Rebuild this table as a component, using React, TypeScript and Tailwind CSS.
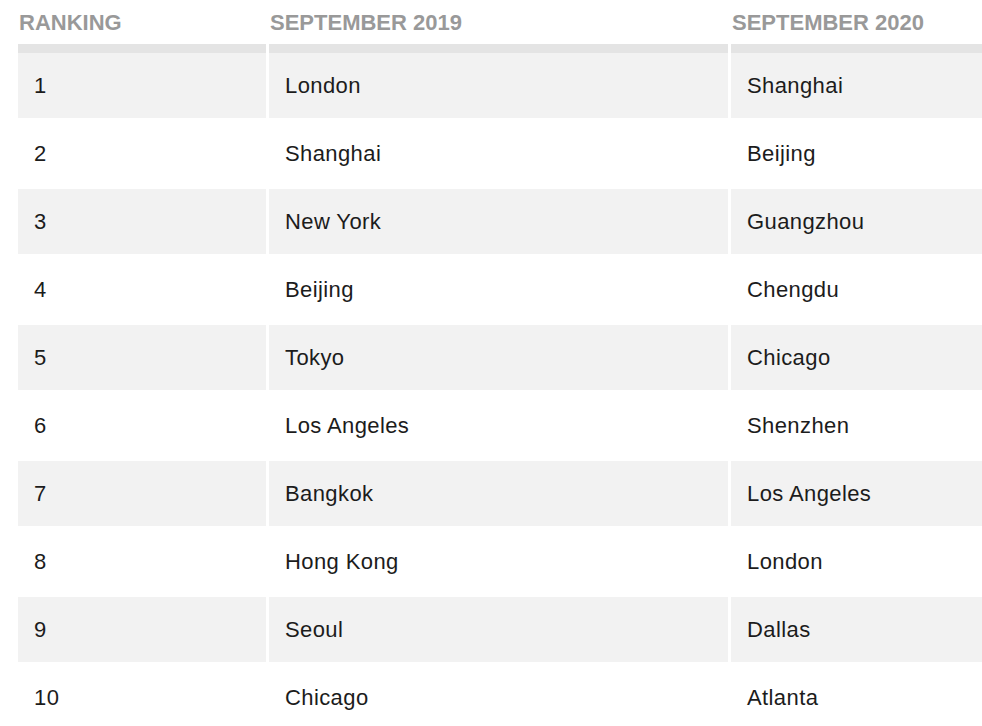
const rows = [
  ["1", "London", "Shanghai"],
  ["2", "Shanghai", "Beijing"],
  ["3", "New York", "Guangzhou"],
  ["4", "Beijing", "Chengdu"],
  ["5", "Tokyo", "Chicago"],
  ["6", "Los Angeles", "Shenzhen"],
  ["7", "Bangkok", "Los Angeles"],
  ["8", "Hong Kong", "London"],
  ["9", "Seoul", "Dallas"],
  ["10", "Chicago", "Atlanta"],
]

const cols = "grid grid-cols-[248px_459px_251px] gap-x-[3px]"

export default function App() {
  return (
    <div className="h-[726px] w-[982px] overflow-hidden bg-white pl-[18px] font-['Liberation_Sans',Arial,sans-serif]">
      <div className={`${cols} h-[44px] items-center text-[22px] font-bold text-[#999999]`}>
        <div className="pl-px">RANKING</div>
        <div className="pl-px">SEPTEMBER 2019</div>
        <div className="pl-px">SEPTEMBER 2020</div>
      </div>
      <div className="flex flex-col gap-y-[3px]">
        {rows.map((r, i) => (
          <div key={r[0]} className={`${cols} text-[22px] tracking-[0.4px] text-[#1c1c1c]`}>
            {r.map((c, j) => (
              <div
                key={j}
                className={`flex h-[65px] items-center pl-4 ${i % 2 === 0 ? "bg-[#f2f2f2]" : "bg-white"} ${i === 0 ? "box-content border-t-[9px] border-[#e4e4e4]" : ""}`}
              >
                {c}
              </div>
            ))}
          </div>
        ))}
      </div>
    </div>
  )
}
